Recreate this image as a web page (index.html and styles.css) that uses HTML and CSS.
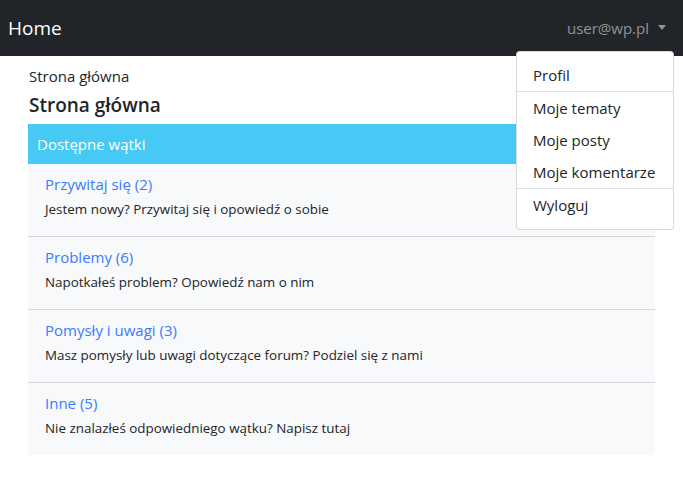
FILE: index.html
```html
<!DOCTYPE html>
<html lang="pl">
<head>
<meta charset="utf-8">
<title>Home</title>
<link rel="stylesheet" href="styles.css">
</head>
<body>
<nav class="navbar">
  <a class="brand" href="#">Home</a>
  <div class="user">
    <span class="user-name">user@wp.pl</span>
    <span class="caret"></span>
    <div class="menu">
      <a class="menu-item" href="#">Profil</a>
      <div class="menu-divider"></div>
      <a class="menu-item" href="#">Moje tematy</a>
      <a class="menu-item" href="#">Moje posty</a>
      <a class="menu-item" href="#">Moje komentarze</a>
      <div class="menu-divider"></div>
      <a class="menu-item" href="#">Wyloguj</a>
    </div>
  </div>
</nav>
<main class="content">
  <div class="crumb">Strona główna</div>
  <h1 class="title">Strona główna</h1>
  <section class="card">
    <div class="card-header">Dostępne wątki</div>
    <ul class="threads">
      <li class="thread">
        <a class="thread-link" href="#">Przywitaj się (2)</a>
        <p class="thread-desc">Jestem nowy? Przywitaj się i opowiedź o sobie</p>
      </li>
      <li class="thread">
        <a class="thread-link" href="#">Problemy (6)</a>
        <p class="thread-desc">Napotkałeś problem? Opowiedź nam o nim</p>
      </li>
      <li class="thread">
        <a class="thread-link" href="#">Pomysły i uwagi (3)</a>
        <p class="thread-desc">Masz pomysły lub uwagi dotyczące forum? Podziel się z nami</p>
      </li>
      <li class="thread">
        <a class="thread-link" href="#">Inne (5)</a>
        <p class="thread-desc">Nie znalazłeś odpowiedniego wątku? Napisz tutaj</p>
      </li>
    </ul>
  </section>
</main>
</body>
</html>
```

FILE: styles.css
```css
* { box-sizing: border-box; }
html, body { margin: 0; padding: 0; }
body {
  font-family: "Open Sans", "Noto Sans", "Liberation Sans", sans-serif;
  color: #212529;
  background: #fff;
}
a { text-decoration: none; }

.navbar {
  height: 56px;
  background: #212529;
  display: flex;
  align-items: center;
  justify-content: space-between;
  padding: 0 17px 0 8px;
}
.brand {
  color: #fff;
  font-size: 19px;
  line-height: 28px;
}
.user {
  position: relative;
  display: flex;
  align-items: center;
  gap: 9px;
  height: 56px;
}
.user-name {
  color: rgba(255,255,255,.5);
  font-size: 15px;
}
.caret {
  width: 0;
  height: 0;
  border-top: 5px solid rgba(255,255,255,.5);
  border-left: 4.5px solid transparent;
  border-right: 4.5px solid transparent;
  margin-top: -2px;
}
.menu {
  position: absolute;
  top: 51px;
  right: -8px;
  width: 158px;
  background: #fff;
  border: 1px solid rgba(0,0,0,.15);
  border-radius: 4px;
  padding: 7px 0 8px;
  z-index: 10;
}
.menu-item {
  display: block;
  height: 32px;
  line-height: 30px;
  padding: 1px 0 0 16px;
  color: #212529;
  font-size: 15px;
  white-space: nowrap;
}
.menu-divider {
  height: 1px;
  background: #dee2e6;
}

.content {
  padding: 9px 28px 0;
}
.crumb {
  font-size: 15px;
  line-height: 22px;
  padding-left: 1px;
}
.title {
  margin: 5px 0 6px;
  font-size: 19px;
  line-height: 26px;
  font-weight: 600;
  padding-left: 1px;
}
.card-header {
  background: #46c9f5;
  color: #fff;
  font-size: 15px;
  line-height: 23px;
  padding: 9px 9px 8px;
}
.threads {
  list-style: none;
  margin: 0;
  padding: 0;
}
.thread {
  background: #f8f9fa;
  padding: 9px 17px 17px;
  border-bottom: 1px solid #d6d8db;
}
.thread:last-child { border-bottom: 0; }
.thread-link {
  display: block;
  color: #3b7bff;
  font-size: 15px;
  line-height: 22px;
}
.thread-desc {
  margin: 4px 0 0;
  font-size: 13.4px;
  line-height: 20px;
}
```
